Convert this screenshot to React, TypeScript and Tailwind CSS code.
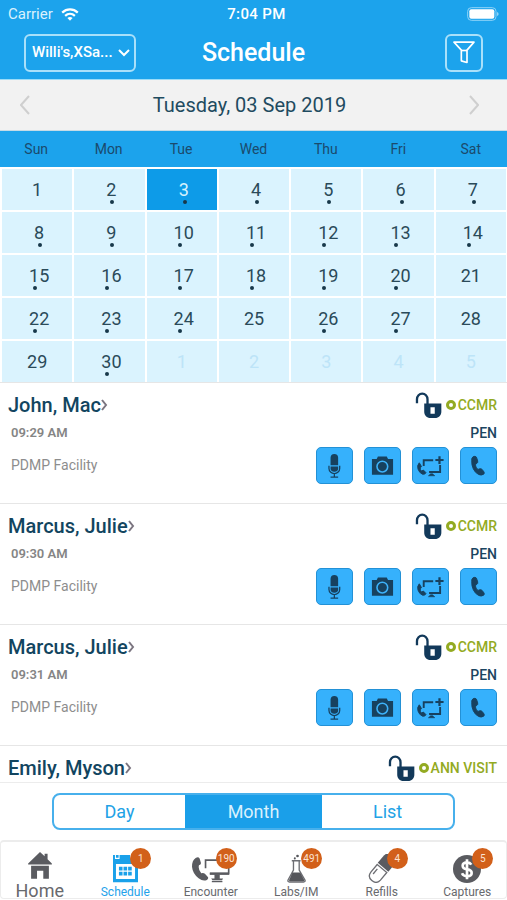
import React from "react";

const weekdays = ["Sun", "Mon", "Tue", "Wed", "Thu", "Fri", "Sat"];

type Day = { label: number; dot?: boolean; selected?: boolean; muted?: boolean };

const daysWithoutVisits = [1, 21, 25, 28, 29];

const monthDays: Day[] = Array.from({ length: 30 }, (_, i) => ({
  label: i + 1,
  dot: !daysWithoutVisits.includes(i + 1),
  selected: i + 1 === 3,
}));
const nextMonthDays: Day[] = [1, 2, 3, 4, 5].map((label) => ({ label, muted: true }));
const allDays = [...monthDays, ...nextMonthDays];
const weeks = [0, 1, 2, 3, 4].map((w) => allDays.slice(w * 7, w * 7 + 7));

type VisitInfo = { name: string; type: string; time?: string };

const visits: VisitInfo[] = [
  { name: "John, Mac", type: "CCMR", time: "09:29 AM" },
  { name: "Marcus, Julie", type: "CCMR", time: "09:30 AM" },
  { name: "Marcus, Julie", type: "CCMR", time: "09:31 AM" },
  { name: "Emily, Myson", type: "ANN VISIT" },
];

function WifiIcon() {
  return (
    <svg viewBox="0 0 54 40" className="h-[13px] w-[18px]" fill="none" stroke="white" strokeWidth="7" aria-hidden="true">
      <path d="M3 14C17 1 37 1 51 14" />
      <path d="M12 24c9-8 21-8 30 0" />
      <path d="M19 31c5-4 11-4 16 0l-8 8z" fill="white" stroke="none" />
    </svg>
  );
}

function BatteryIcon() {
  return (
    <svg viewBox="0 0 96 42" className="h-[14px] w-8" aria-hidden="true">
      <rect x="2" y="2" width="85" height="38" rx="11" fill="none" stroke="#8fd3f8" strokeWidth="3" />
      <rect x="7" y="7" width="75" height="28" rx="6" fill="white" />
      <path d="M90 15q5 2 5 6t-5 6z" fill="#8fd3f8" />
    </svg>
  );
}

function FunnelIcon() {
  return (
    <svg viewBox="0 0 66 68" className="h-[23px] w-[22px]" fill="none" stroke="white" strokeWidth="5" strokeLinejoin="round" aria-hidden="true">
      <path d="M3 3h60L42 27v37l-17-5V27z" />
      <path d="M25 28h17" />
    </svg>
  );
}

function UnlockIcon() {
  return (
    <svg viewBox="0 0 80 82" className="h-[27px] w-[27px]" aria-hidden="true">
      <path d="M5 34V22a16 17 0 0 1 32 0v16" fill="none" stroke="#12395a" strokeWidth="7" />
      <path fillRule="evenodd" d="M27 35h52v25c0 11-8 19-19 19H46c-11 0-19-8-19-19zM46 46v20h13V46z" fill="#12395a" />
    </svg>
  );
}

function MicIcon() {
  return (
    <svg viewBox="0 0 111 111" className="size-full" fill="#17415f" aria-hidden="true">
      <path d="M43 55V31a12 12 0 0 1 24 0v24z" />
      <path d="M43 59h24v6a12 10 0 0 1-24 0z" />
      <path d="M38 56v9a17 16 0 0 0 34 0v-9M55 80v12M43 92h24" fill="none" stroke="#17415f" strokeWidth="4" />
    </svg>
  );
}

function CameraIcon() {
  return (
    <svg viewBox="0 0 111 111" className="size-full" fill="#17415f" aria-hidden="true">
      <path d="M22 35h15l4-8h28l4 8h16v50H22z" />
      <circle cx="55" cy="59" r="17" fill="none" stroke="#3db2fa" strokeWidth="5" />
    </svg>
  );
}

function TelehealthIcon() {
  return (
    <svg viewBox="0 0 111 111" className="size-full" fill="none" stroke="#17415f" strokeWidth="6" aria-hidden="true">
      <path d="M20 47q-8 8-4 20t14 16q9 2 11-5l-8-8-6 3q-5-4-4-10l4-4z" fill="#17415f" strokeWidth="3" />
      <path d="M34 57V39h30M86 54v22H51" />
      <path d="M49 88h20l-7-6h-6z" fill="#17415f" strokeWidth="2" />
      <path d="M84 26v25M71 38h26" strokeWidth="7" />
    </svg>
  );
}

function PhoneIcon() {
  return (
    <svg viewBox="0 0 111 111" className="size-full" fill="#17415f" stroke="#17415f" strokeWidth="3" strokeLinejoin="round" aria-hidden="true">
      <path d="M38 28q7-4 11 1l4 12q1 6-3 8l-4 3q0 5 2 9t6 7l5-2q5-1 8 2l6 8q2 4-1 7-8 5-16 1-11-5-17-18T34 39q-1-7 4-11z" />
    </svg>
  );
}

function HomeIcon() {
  return (
    <svg viewBox="0 0 72 82" className="h-[27px] w-6" fill="#5a5b60" aria-hidden="true">
      <path d="M36 0l14 13V5h9v17l13 13v3H0v-3z" />
      <path d="M9 42h54v39H46V57H27v24H9z" />
    </svg>
  );
}

function ScheduleIcon() {
  return (
    <svg viewBox="0 0 76 86" className="h-[29px] w-[25px]" fill="#1aa1ea" aria-hidden="true">
      <path fillRule="evenodd" d="M0 2h6v12h14V2h32v12h14V2h10v83H0zM9 29v46h58V29z" />
      <path d="M9 2h8v8H9zM55 2h8v8h-8z" />
      <path d="M18 38h11v11H18zM32 38h11v11H32zM46 38h11v11H46zM18 53h11v11H18zM32 53h11v11H32zM46 53h11v11H46z" />
    </svg>
  );
}

function EncounterIcon() {
  return (
    <svg viewBox="0 0 115 78" className="h-[26px] w-[38px]" aria-hidden="true">
      <path d="M11 3q8-5 12 1l4 13q1 6-6 8-3 12 7 24 6-3 11 1l9 10q3 5-3 9-11 6-25-5Q2 50 0 29 0 10 11 3z" fill="#5a5b60" />
      <path d="M41 34V9h70v41H54" fill="none" stroke="#5a5b60" strokeWidth="5" />
      <path d="M54 50h58" stroke="#5a5b60" strokeWidth="7" />
      <path d="M68 52h16v13h10l-3 5H62l-4-5h10z" fill="#5a5b60" />
      <path d="M60 74h32" stroke="#5a5b60" strokeWidth="4" />
    </svg>
  );
}

function LabsIcon() {
  return (
    <svg viewBox="0 0 56 86" className="h-[29px] w-[19px]" aria-hidden="true">
      <path d="M14 20h26M19 21v27L3 77q-2 6 4 6h42q6 0 4-6L36 48V21" fill="white" stroke="#6d6e73" strokeWidth="4" />
      <path d="M16 55h23l12 22q1 4-3 4H9q-4 0-3-4z" fill="#55565b" />
      <circle cx="31" cy="6" r="4" fill="#55565b" />
      <circle cx="23" cy="13" r="3" fill="#55565b" />
    </svg>
  );
}

function RefillsIcon() {
  return (
    <svg viewBox="0 0 84 88" className="h-[29px] w-7" aria-hidden="true">
      <g transform="rotate(40 42 44)">
        <path d="M21 39V10Q23-9 42-9T63 10v29z" fill="#5a5b60" />
        <path d="M23 44h38v30q-1 18-19 18T23 74z" fill="white" stroke="#6d6e73" strokeWidth="4" />
        <path d="M32 54v20" stroke="#6d6e73" strokeWidth="4" />
      </g>
    </svg>
  );
}

function CapturesIcon() {
  return (
    <svg viewBox="0 0 84 84" className="size-7" aria-hidden="true">
      <circle cx="42" cy="42" r="42" fill="#5a5b60" />
      <path d="M55 29q-5-8-14-7-12 1-12 10t13 11q14 2 14 11t-13 10q-12 0-16-9M42 13v60" fill="none" stroke="white" strokeWidth="8" />
    </svg>
  );
}

const actions = [
  { label: "Dictate", Icon: MicIcon },
  { label: "Camera", Icon: CameraIcon },
  { label: "Telehealth", Icon: TelehealthIcon },
  { label: "Call", Icon: PhoneIcon },
];

const tabs = [
  { label: "Home", Icon: HomeIcon },
  { label: "Schedule", Icon: ScheduleIcon, badge: 1, active: true },
  { label: "Encounter", Icon: EncounterIcon, badge: 190 },
  { label: "Labs/IM", Icon: LabsIcon, badge: 491 },
  { label: "Refills", Icon: RefillsIcon, badge: 4 },
  { label: "Captures", Icon: CapturesIcon, badge: 5 },
];

function Header() {
  return (
    <header className="border-b border-[#9bdcf8] bg-[#1ca3ec] text-white">
      <div className="grid grid-cols-3 items-center px-2 pt-1 text-[15px] leading-5">
        <div className="flex items-center gap-2 text-[#d9f1fd]">
          Carrier <WifiIcon />
        </div>
        <div className="pl-1.5 text-center font-medium tracking-wide">7:04 PM</div>
        <div className="flex justify-end">
          <BatteryIcon />
        </div>
      </div>
      <div className="grid h-[55px] grid-cols-[1fr_auto_1fr] items-center px-6 pt-0.5">
        <div className="relative h-[38px] w-28">
          <select
            aria-label="Provider"
            className="h-[38px] w-28 appearance-none rounded-md border-2 border-[#a9e0fa] bg-transparent pl-1.5 text-[15px] font-medium text-white"
          >
            <option>Willi's,XSa...</option>
          </select>
          <svg viewBox="0 0 12 8" className="pointer-events-none absolute top-[15px] right-1.5 h-2 w-3" fill="none" stroke="white" strokeWidth="2" aria-hidden="true">
            <path d="M1 1l5 5 5-5" />
          </svg>
        </div>
        <h1 className="text-[25px] leading-10 font-medium">Schedule</h1>
        <button
          type="button"
          aria-label="Filter"
          className="flex size-[38px] items-center justify-center justify-self-end rounded-md border-2 border-[#a9e0fa]"
        >
          <FunnelIcon />
        </button>
      </div>
    </header>
  );
}

function DateBar() {
  return (
    <div className="flex h-[51px] items-center justify-between border-b border-[#c5dbe6] bg-[#f2f2f2] px-5 text-[#1f4b60]">
      <button type="button" aria-label="Previous day">
        <svg viewBox="0 0 10 20" className="h-5 w-2.5" fill="none" stroke="#cfcfcf" strokeWidth="2" aria-hidden="true">
          <path d="M9 1L1 10l8 9" />
        </svg>
      </button>
      <h2 className="text-xl">Tuesday, 03 Sep 2019</h2>
      <button type="button" aria-label="Next day" className="mr-2">
        <svg viewBox="0 0 10 20" className="h-5 w-2.5" fill="none" stroke="#cfcfcf" strokeWidth="2" aria-hidden="true">
          <path d="M1 1l8 9-8 9" />
        </svg>
      </button>
    </div>
  );
}

function DayCell({ day }: { day: Day }) {
  const tone = day.selected
    ? "bg-[#0d9be8] text-[#d5f1fd]"
    : day.muted
      ? "bg-[#daf3fe] text-[#bde4f8]"
      : "bg-[#daf3fe] text-[#2a4a59]";
  return (
    <button type="button" className={`flex h-[41px] items-center justify-center text-lg ${tone}`}>
      <span className={day.dot ? "relative ml-1" : ""}>
        {day.label}
        {day.dot && <span className="absolute bottom-0 left-1 size-1 rounded-full bg-[#17384a]" />}
      </span>
    </button>
  );
}

function Calendar() {
  return (
    <section aria-label="September 2019">
      <div className="grid h-9 grid-cols-7 items-center bg-[#1ca3ec] text-center text-sm text-[#1b4a6c]">
        {weekdays.map((d) => (
          <div key={d}>{d}</div>
        ))}
      </div>
      <div className="flex flex-col gap-0.5 pt-0.5 pr-px pl-0.5">
        {weeks.map((week, i) => (
          <div key={i} className="grid grid-cols-7 gap-0.5">
            {week.map((day, j) => (
              <DayCell key={j} day={day} />
            ))}
          </div>
        ))}
      </div>
    </section>
  );
}

function Visit({ visit }: { visit: VisitInfo }) {
  return (
    <li className="border-t border-[#e6e6e6] pr-2.5 pl-2">
      <div className="flex items-center justify-between pt-2">
        <a href="#visit" className="flex items-center text-xl leading-7 font-medium text-[#124560]">
          {visit.name}
          <svg viewBox="0 0 8 12" className="h-3 w-2" fill="none" stroke="#7b7580" strokeWidth="2" aria-hidden="true">
            <path d="M1 1l4 5-4 5" />
          </svg>
        </a>
        <div className="flex items-center text-sm leading-7 font-medium text-[#93aa22]">
          <UnlockIcon />
          <span className="mr-0.5 ml-1 size-2.5 rounded-full border-[3px] border-current" />
          {visit.type}
        </div>
      </div>
      {visit.time && (
        <div className="flex justify-between pb-[19px] pl-[3px]">
          <div>
            <p className="pt-1 text-[13px] leading-5 font-semibold text-[#858585]">{visit.time}</p>
            <p className="pt-3 text-sm leading-5 text-[#8d8d8d]">PDMP Facility</p>
          </div>
          <div className="flex flex-col items-end gap-1">
            <p className="pt-1 text-sm leading-5 font-medium text-[#1b4560]">PEN</p>
            <div className="flex gap-[11px]">
              {actions.map(({ label, Icon }) => (
                <button
                  key={label}
                  type="button"
                  aria-label={label}
                  className="size-[37px] rounded-[5px] border border-[#2391d6] bg-[#36b1fc]"
                >
                  <Icon />
                </button>
              ))}
            </div>
          </div>
        </div>
      )}
    </li>
  );
}

function ViewSwitch() {
  return (
    <div className="border-t border-[#ececec] px-[52px] py-2.5">
      <div className="grid h-[37px] grid-cols-[20fr_21fr_20fr] overflow-hidden rounded-lg border-2 border-[#47b0ec] text-lg text-[#22a2e6]">
        <button type="button">Day</button>
        <button type="button" aria-pressed="true" className="bg-[#1a9fe9] text-[#d9f1fd]">
          Month
        </button>
        <button type="button">List</button>
      </div>
    </div>
  );
}

function TabBar() {
  return (
    <nav className="mb-px rounded border border-t-2 border-[#ececec]">
      <div className="-mx-1 grid h-14 grid-cols-6">
        {tabs.map(({ label, Icon, badge, active }) => (
          <a
            key={label}
            href={`#${label}`}
            className={`relative flex flex-col items-center ${active ? "text-[#1fa2ea]" : "text-[#68696d]"}`}
          >
            <span className={`flex h-[41px] items-end ${label === "Home" ? "pb-1" : ""}`}>
              <Icon />
            </span>
            <span className={label === "Home" ? "text-lg leading-4" : "pt-px text-xs leading-4"}>{label}</span>
            {badge !== undefined && (
              <span className="absolute top-1.5 left-1/2 ml-[5px] flex size-[21px] items-center justify-center rounded-full bg-[#d2601a] text-[10px] text-[#fbe3d3]">
                {badge}
              </span>
            )}
          </a>
        ))}
      </div>
    </nav>
  );
}

export default function App() {
  return (
    <div className="flex h-screen flex-col overflow-x-hidden bg-white font-[Roboto,sans-serif]">
      <Header />
      <DateBar />
      <Calendar />
      <ul className="min-h-0 flex-1 overflow-y-auto [scrollbar-width:none]">
        {visits.map((visit, i) => (
          <Visit key={i} visit={visit} />
        ))}
      </ul>
      <ViewSwitch />
      <TabBar />
    </div>
  );
}
